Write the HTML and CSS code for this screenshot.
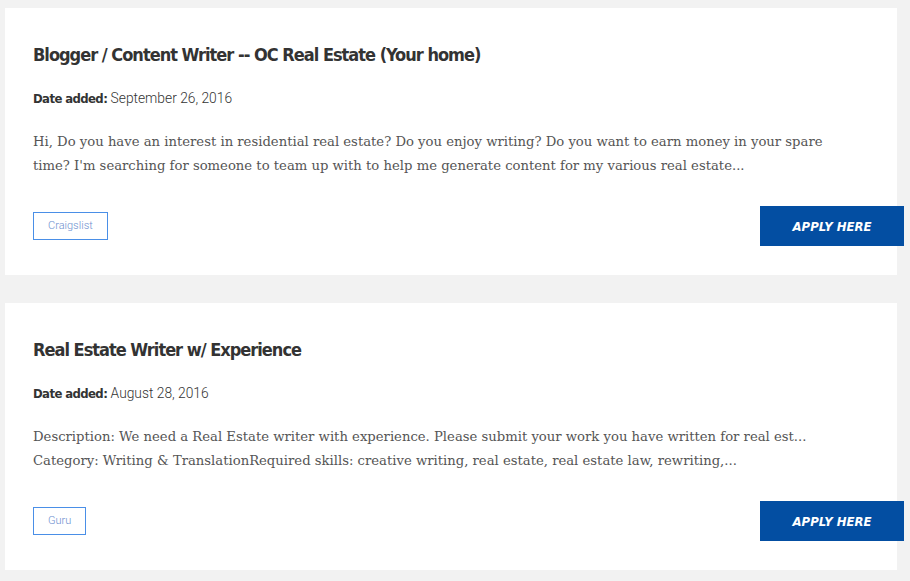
FILE: index.html
```html
<!DOCTYPE html>
<html>
<head>
<meta charset="utf-8">
<link rel="stylesheet" href="styles.css">
</head>
<body>
<div class="list">
  <article class="card">
    <h2 class="title">Blogger / Content Writer -- OC Real Estate (Your home)</h2>
    <p class="date"><b>Date added:</b> September 26, 2016</p>
    <p class="desc">Hi, Do you have an interest in residential real estate? Do you enjoy writing? Do you want to earn money in your spare time? I'm searching for someone to team up with to help me generate content for my various real estate...</p>
    <div class="foot">
      <span class="tag">Craigslist</span>
      <a class="apply">APPLY HERE</a>
    </div>
  </article>
  <article class="card">
    <h2 class="title">Real Estate Writer w/ Experience</h2>
    <p class="date"><b>Date added:</b> August 28, 2016</p>
    <p class="desc">Description: We need a Real Estate writer with experience. Please submit your work you have written for real est...<br>Category: Writing &amp; TranslationRequired skills: creative writing, real estate, real estate law, rewriting,...</p>
    <div class="foot">
      <span class="tag">Guru</span>
      <a class="apply">APPLY HERE</a>
    </div>
  </article>
</div>
</body>
</html>
```
FILE: styles.css
```css
html, body {
  margin: 0;
  padding: 0;
  background: #f2f2f2;
}
.list {
  display: flex;
  flex-direction: column;
  gap: 28px;
  padding: 8px 13px 0 5px;
}
.card {
  background: #fff;
  padding: 35px 28px 29px 28px;
  display: flex;
  flex-direction: column;
}
.title {
  margin: 0;
  font-family: "DejaVu Sans Condensed", "DejaVu Sans", sans-serif;
  font-stretch: condensed;
  font-weight: 700;
  font-size: 18px;
  letter-spacing: -1px;
  line-height: 24px;
  color: #333;
}
.date {
  margin: 21px 0 0;
  font-family: Roboto, sans-serif;
  font-weight: 300;
  font-size: 13.8px;
  line-height: 20px;
  color: #333;
}
.date b {
  font-family: "DejaVu Sans Condensed", "DejaVu Sans", sans-serif;
  font-stretch: condensed;
  font-weight: 700;
  font-size: 13px;
  letter-spacing: -0.6px;
}
.desc {
  margin: 21px 0 0;
  font-family: "DejaVu Serif", serif;
  font-size: 13.2px;
  line-height: 24px;
  color: #555;
  max-width: 800px;
}
.foot {
  margin-top: 28px;
  display: flex;
  justify-content: space-between;
  align-items: center;
  height: 40px;
}
.tag {
  border: 1px solid #4a8fe7;
  color: #6d8fcf;
  font-family: Roboto, sans-serif;
  font-weight: 300;
  font-size: 11px;
  height: 26px;
  line-height: 26px;
  padding: 0 14px;
}
.apply {
  margin-right: -35px;
  width: 144px;
  height: 40px;
  background: #034ea2;
  color: #fff;
  font-family: "DejaVu Sans Condensed", "DejaVu Sans", sans-serif;
  font-stretch: condensed;
  font-weight: 700;
  font-style: italic;
  font-size: 13px;
  display: flex;
  align-items: center;
  justify-content: center;
}
```
